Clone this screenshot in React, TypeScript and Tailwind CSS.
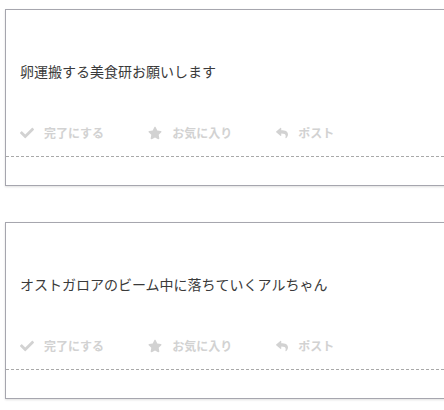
import { FaCheck, FaStar, FaReply } from "react-icons/fa";

const posts = [
  { id: 1, body: "卵運搬する美食研お願いします" },
  { id: 2, body: "オストガロアのビーム中に落ちていくアルちゃん" },
];

const actions = [
  { icon: FaCheck, label: "完了にする", size: 14 },
  { icon: FaStar, label: "お気に入り", size: 14 },
  { icon: FaReply, label: "ポスト", size: 12 },
];

const PostCard = ({ body }: { body: string }) => (
  <article className="w-[470px] border border-[#a6a6ae] bg-white shadow-[0_1px_2px_rgba(0,0,0,0.12)]">
    <p className="px-[14px] pt-[51px] text-[14px] leading-[20px] text-[#3a3a3a]">{body}</p>
    <div className="mt-[42px] flex items-center gap-[44px] border-b border-dashed border-[#a9a9a9] px-[14px] pb-[13px]">
      {actions.map((action) => (
        <button key={action.label} className="flex h-[20px] items-center gap-[10px] text-[12px] font-bold text-[#d2d2d2]">
          <action.icon size={action.size} />
          <span>{action.label}</span>
        </button>
      ))}
    </div>
    <div className="h-[28px]" />
  </article>
);

const App = () => (
  <div className="h-[410px] w-[444px] overflow-hidden bg-white pl-[5px] pt-[9px] font-['Noto_Sans_CJK_JP',sans-serif]">
    <div className="flex flex-col gap-[36px]">
      {posts.map((post) => (
        <PostCard key={post.id} body={post.body} />
      ))}
    </div>
  </div>
);

export default App;
